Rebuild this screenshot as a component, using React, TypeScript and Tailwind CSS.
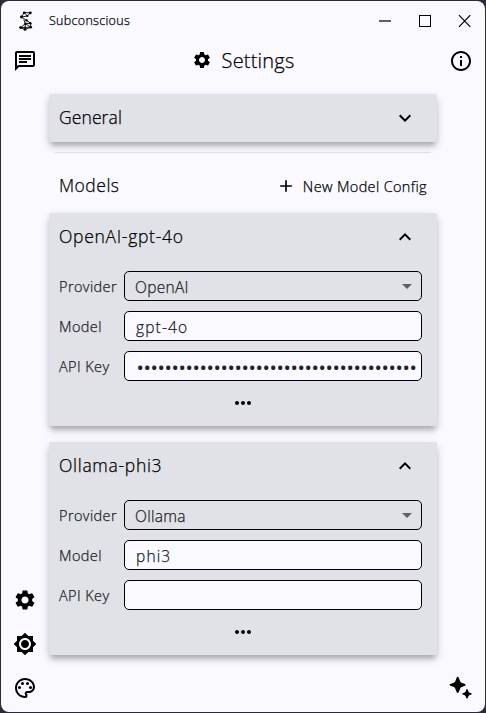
import type { ReactNode } from "react";
import {
  MdAdd,
  MdArrowDropDown,
  MdBrightness7,
  MdExpandLess,
  MdExpandMore,
  MdMoreHoriz,
  MdOutlineChat,
  MdOutlineInfo,
  MdOutlinePalette,
  MdSettings,
} from "react-icons/md";

function Logo() {
  return (
    <svg width="14" height="20" viewBox="0 0 14 20" fill="none" stroke="#000" strokeWidth="0.9">
      <path d="M11.3 1.8 5.2 1.6 2.4 6 8.3 5 11.3 1.8M5.2 1.6 8.3 5M2.4 6 7.6 9.4 11.6 12.2 6.4 12.6 4.8 8.6M6.4 12.6 6 17.6M11.6 12.2 11.8 16.2 6 18.6 1.6 16.6 6.4 12.6 11.8 16.2M1.6 16.6 11.8 16.2" />
      <g fill="#000" stroke="none">
        <circle cx="11.3" cy="1.9" r="1.4" />
        <circle cx="5.2" cy="1.8" r="1.3" />
        <circle cx="2.4" cy="6" r="1.4" />
        <circle cx="8.3" cy="5" r="1.1" />
        <circle cx="7.6" cy="9.4" r="1.2" />
        <circle cx="11.3" cy="12.2" r="1.2" />
        <circle cx="6.4" cy="12.8" r="1.2" />
        <circle cx="11.8" cy="16.2" r="1.2" />
        <circle cx="6" cy="18.4" r="1.4" />
        <circle cx="1.6" cy="16.6" r="1.4" />
      </g>
    </svg>
  );
}

function TitleBar() {
  return (
    <div className="flex h-10 shrink-0 items-center pl-[18px]">
      <Logo />
      <span className="ml-4 flex-1 text-[12.5px] tracking-[0.3px]">Subconscious</span>
      <svg width="93" height="14" viewBox="0 0 93 14" fill="none" stroke="#000" className="mr-[14px]">
        <path d="M1 7H13" stroke="#606064" strokeWidth="2" />
        <rect x="41.5" y="1.5" width="11" height="11" />
        <path d="M81 1.2 92.3 12.8M92.3 1.2 81 12.8" strokeWidth="1.2" />
      </svg>
    </div>
  );
}

const cardShadow = "shadow-[0_5px_5px_-2px_rgba(0,0,0,0.2),0_5px_9px_0_rgba(0,0,0,0.14),0_1px_10px_0_rgba(0,0,0,0.06)]";

function Card({ title, open, children }: { title: string; open: boolean; children?: ReactNode }) {
  return (
    <section className={`rounded-[2px] bg-[#e1e2e7] ${cardShadow}`}>
      <div className="flex h-12 items-center justify-between pr-5 pl-2.5">
        <span className={`pb-px text-[17.5px] ${open ? "tracking-[0.7px]" : "tracking-[0.1px]"}`}>{title}</span>
        {open ? <MdExpandLess size={24} /> : <MdExpandMore size={24} />}
      </div>
      {children}
    </section>
  );
}

function Field({ label, children }: { label: string; children: ReactNode }) {
  return (
    <div className="flex h-[30px] items-center">
      <span className="w-[65px] pt-0.5 text-[14.5px] tracking-[0.4px] text-[#202125]">{label}</span>
      {children}
    </div>
  );
}

const box = "flex h-[30px] w-[298px] items-center rounded-[5px] border border-black text-[#202125]";

function ModelCard({ title, provider, model, apiKey }: { title: string; provider: string; model: string; apiKey: string }) {
  return (
    <Card title={title} open>
      <div className="flex flex-col gap-2.5 px-2.5 pt-2.5">
        <Field label="Provider">
          <div className={`${box} justify-between pr-0.5 pl-2.5`}>
            <span className="pt-[3px] text-[15.5px] tracking-[0.3px]">{provider}</span>
            <MdArrowDropDown size={24} className="text-[#606064]" />
          </div>
        </Field>
        <Field label="Model">
          <div className={`${box} bg-[#f9f9ff] pl-[11px]`}>
            <span className="pt-[3px] text-[15.5px] tracking-[1.15px]">{model}</span>
          </div>
        </Field>
        <Field label="API Key">
          <div className={`${box} justify-end bg-[#f9f9ff] pr-1`}>
            <span className="pt-[3px] text-[17px] leading-none font-semibold tracking-[0.61px] whitespace-nowrap [-webkit-text-stroke:0]">{apiKey}</span>
          </div>
        </Field>
        <div className="flex h-[35px] items-start justify-center">
          <MdMoreHoriz size={24} />
        </div>
      </div>
    </Card>
  );
}

export default function App() {
  return (
    <div className="h-[713px] w-[486px] bg-[#2b2a36] p-px font-['Open_Sans',sans-serif] font-light text-black [-webkit-text-stroke:0.25px]">
      <div className="flex h-full flex-col overflow-hidden rounded-lg bg-[#f9f9ff]">
        <TitleBar />
        <header className="flex h-10 shrink-0 items-center justify-between px-3">
          <MdOutlineChat size={24} />
          <div className="flex items-center gap-2.5 pb-0.5">
            <MdSettings size={20} />
            <h1 className="pt-0.5 text-[20px] leading-none tracking-[0.2px]">Settings</h1>
          </div>
          <MdOutlineInfo size={24} />
        </header>
        <div className="flex flex-1">
          <nav className="flex w-12 flex-col items-center justify-end gap-5 pb-3">
            <MdSettings size={24} />
            <MdBrightness7 size={24} />
            <MdOutlinePalette size={24} />
          </nav>
          <main className="w-[388px] pt-[13px]">
            <Card title="General" open={false} />
            <div className="mx-1.5 mt-2.5 h-px bg-[#dfe0e4]" />
            <div className="flex h-[60px] items-center justify-between px-2.5 pt-1.5">
              <h2 className="pb-px text-[17.5px] tracking-[0.5px]">Models</h2>
              <button className="flex items-center gap-[7px] text-[14.5px] tracking-[0.35px]">
                <MdAdd size={20} />
                <span className="pt-px">New Model Config</span>
              </button>
            </div>
            <div className="flex flex-col gap-4">
              <ModelCard title="OpenAI-gpt-4o" provider="OpenAI" model="gpt-4o" apiKey={"•".repeat(40)} />
              <ModelCard title="Ollama-phi3" provider="Ollama" model="phi3" apiKey="" />
            </div>
          </main>
          <aside className="flex flex-1 items-end justify-end pr-[13px] pb-3">
            <svg width="24" height="24" viewBox="0 0 24 24">
              <path d="M9.6.8Q10.4.8 10.8 1.8L12.2 5.4Q12.6 6.4 13.6 6.8L17 8.1Q18.6 8.9 17 9.7L13.6 11Q12.6 11.4 12.2 12.4L10.8 15.9Q9.7 17.8 8.6 15.9L7.2 12.4Q6.8 11.4 5.8 11L2.3 9.7Q.5 8.9 2.3 8.1L5.8 6.8Q6.8 6.4 7.2 5.4L8.6 1.8Q9 .8 9.6.8Z" />
              <path d="M19 13Q19.5 13 19.8 13.8L20.4 15.5Q20.6 16.2 21.3 16.5L23.2 17.2Q24.4 17.9 23.2 18.5L21.3 19.2Q20.6 19.5 20.4 20.2L19.7 22Q19 23.3 18.3 22L17.6 20.2Q17.3 19.5 16.6 19.2L14.9 18.5Q13.6 17.9 14.9 17.2L16.6 16.5Q17.3 16.2 17.6 15.5L18.3 13.8Q18.5 13 19 13Z" />
            </svg>
          </aside>
        </div>
      </div>
    </div>
  );
}
